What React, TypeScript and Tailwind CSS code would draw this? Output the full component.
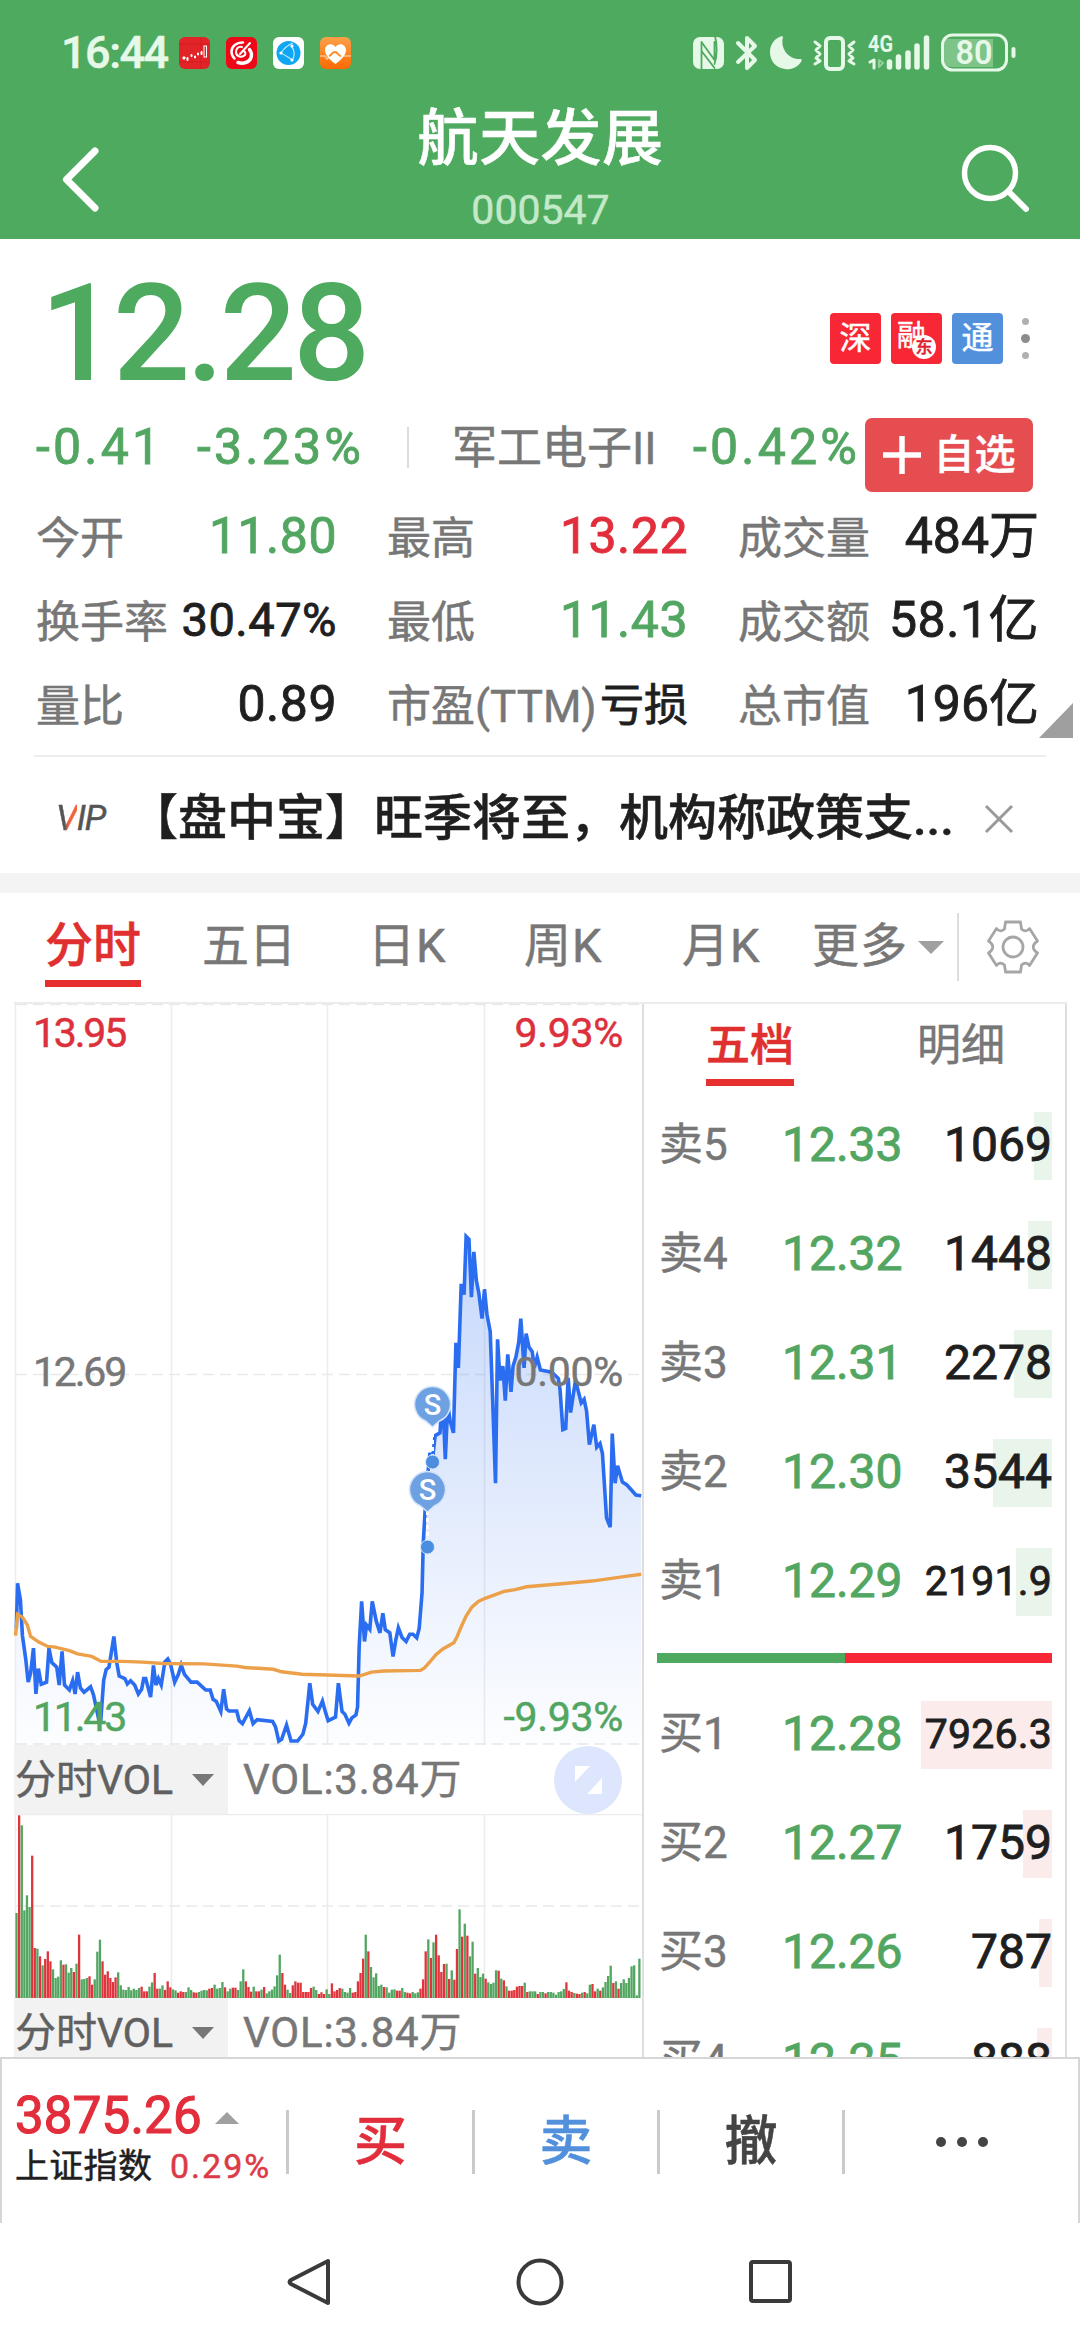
import type { ReactNode } from "react";
import clsx from "clsx";

const FONT = "font-['Roboto','Noto_Sans_CJK_SC',sans-serif]";

type Level = { label: string; price: string; volume: string; bar: number };

const asks: Level[] = [
  { label: "卖5", price: "12.33", volume: "1069", bar: 18 },
  { label: "卖4", price: "12.32", volume: "1448", bar: 24 },
  { label: "卖3", price: "12.31", volume: "2278", bar: 38 },
  { label: "卖2", price: "12.30", volume: "3544", bar: 59 },
  { label: "卖1", price: "12.29", volume: "2191.9", bar: 36 },
];

const bids: Level[] = [
  { label: "买1", price: "12.28", volume: "7926.3", bar: 131 },
  { label: "买2", price: "12.27", volume: "1759", bar: 29 },
  { label: "买3", price: "12.26", volume: "787", bar: 13 },
  { label: "买4", price: "12.25", volume: "888", bar: 15 },
];

// One entry per minute: g = falling, r = rising, followed by the bar height
const volumeBars = (
  "g255 r548 g518 g263 g308 g273 r427 r150 g148 r125 g98 r117 r140 r110 g86 g60 g64 g113 r100 g101 " +
  "g76 g90 r78 g103 r190 g56 g57 g60 r65 r40 g56 g139 g175 r110 r70 r80 r60 r48 r62 g77 " +
  "g38 g25 g24 g33 g23 g28 g24 g30 r34 r20 r20 g34 g47 r75 r28 g28 g38 r24 r50 r32 " +
  "g26 g23 r16 r20 r18 g18 g32 g24 r17 r16 g18 g22 g24 g23 r28 r30 g40 g28 g30 g48 " +
  "r32 g20 g28 r31 r31 g24 g50 g86 r50 r33 r19 g34 r20 r20 g25 r33 g14 g20 g25 g35 " +
  "g68 g130 r75 r40 g25 g15 r38 r50 r46 r46 r18 r18 r18 r30 g34 g24 r12 r17 r12 g26 " +
  "g12 r44 r20 r24 r30 g28 g18 g16 g30 r16 r18 r50 r75 r118 g190 r140 g93 g62 g74 g36 " +
  "g40 r33 g32 g16 g25 g26 r22 r22 g30 g18 r16 r14 g18 g14 g17 r28 r56 r140 g176 r120 " +
  "g167 r190 r128 r78 r102 g103 r57 g83 r55 r147 g266 r184 g223 r187 g125 g169 r73 g90 g63 g73 " +
  "r58 g47 g42 g46 g83 r82 g58 r53 g35 r22 r22 r24 r34 r36 r36 g46 r18 g20 g20 g20 " +
  "r12 g18 g18 r14 g18 g18 g16 g10 g18 g20 g27 r47 r22 r18 g15 r13 r12 g16 r18 g14 " +
  "g40 r42 r20 g28 r22 g32 g48 g66 g97 r45 g50 r28 g45 g56 g45 g60 g95 g98 g8 g118"
)
  .split(" ")
  .map((s) => ({ up: s[0] === "r", h: Number(s.slice(1)) / 3 }));

const priceLine =
  "40,1200 43,1073 50,1120 55,1220 63,1285 69,1350 75,1325 82,1255 88,1383 94,1312 101,1356 114,1350 120,1255 127,1295 139,1308 145,1358 152,1264 158,1358 170,1372 178,1346 184,1383 190,1322 197,1366 206,1378 222,1363 229,1385 242,1455 247,1455 254,1345 260,1315 267,1308 279,1222 286,1295 292,1333 306,1340 312,1355 320,1346 330,1358 339,1383 347,1370 352,1340 357,1340 369,1392 376,1303 382,1358 388,1340 395,1358 404,1293 411,1285 418,1300 428,1350 437,1328 444,1302 452,1328 468,1350 483,1350 504,1372 515,1372 522,1398 530,1404 541,1432 548,1370 555,1425 561,1431 580,1431 586,1458 594,1466 611,1430 620,1466 630,1455 668,1460 675,1475 683,1515 690,1510 702,1470 713,1515 729,1515 742,1496 749,1465 759,1353 766,1412 779,1432 790,1403 797,1432 804,1458 822,1448 829,1353 838,1432 845,1440 855,1465 862,1450 872,1442 876,1420 880,1250 886,1124 893,1236 898,1190 906,1202 912,1124 922,1180 931,1212 938,1157 944,1203 955,1212 963,1278 970,1230 976,1198 985,1225 995,1236 1004,1216 1012,1216 1021,1226 1027,1200 1034,1100 1037,960 1042,860 1046,790 1053,712 1061,712 1066,660 1078,652 1084,540 1091,726 1097,572 1103,620 1111,652 1117,400 1123,470 1130,235 1137,265 1142,102 1149,110 1155,272 1161,145 1167,225 1173,260 1181,332 1187,250 1193,320 1201,368 1207,560 1214,793 1219,390 1225,505 1232,465 1238,562 1244,432 1252,537 1257,465 1264,440 1271,398 1276,332 1284,470 1289,374 1296,412 1304,425 1309,470 1316,440 1324,476 1352,482 1368,500 1372,530 1379,643 1386,640 1392,498 1398,595 1410,505 1424,568 1431,558 1437,590 1444,685 1455,629 1462,692 1470,682 1476,710 1486,890 1495,916 1500,654 1507,793 1513,744 1525,790 1536,798 1558,826 1571,828";

const averageLine =
  "38,1220 43,1160 55,1168 67,1190 75,1222 95,1238 117,1250 135,1252 170,1262 190,1271 225,1278 248,1292 300,1292 350,1294 400,1298 500,1299 580,1305 600,1309 670,1314 690,1321 740,1328 880,1333 910,1322 940,1319 1030,1317 1040,1310 1052,1295 1068,1273 1085,1257 1112,1240 1120,1222 1130,1195 1142,1165 1156,1140 1172,1124 1187,1116 1235,1096 1262,1091 1290,1083 1390,1073 1450,1067 1520,1056 1571,1048";

function StatusBar() {
  return (
    <div className="flex h-[100px] items-start justify-between pl-[61px] pr-[64px] pt-[33px]">
      <div className="flex h-[40px] items-center">
        <span className="w-[118px] text-[45px] font-medium leading-[40px] tracking-[-1.5px] text-[#e6f8e8]">
          16:44
        </span>
        <div className="flex gap-4">
          <svg width="31" height="32" viewBox="0 0 31 32">
            <rect width="31" height="32" rx="6" fill="#e22428" />
            <path d="M0 7H31M22 0V32M0 25H31" stroke="#d01c22" />
            <path d="M4 20h2v2h-2zM8 20.500h1v3h-1zM12 17.500h1v2h-1zM15.500 19h1v2h-1zM18.500 16h1v2h-1zM22 14.500h1v3h-1z" fill="#fff" stroke="#fff" />
            <rect x="25" y="9" width="2.500" height="11" fill="none" stroke="#fff" />
          </svg>
          <svg width="31" height="32" viewBox="0 0 31 32" fill="none" strokeLinecap="round">
            <rect width="31" height="32" rx="6" fill="#ee0716" />
            <path d="M17 5.500C11 5 5.500 9 5.500 14.500c0 3 1 5 3 7" stroke="#fff" strokeWidth="2.500" />
            <path d="M12 25.500c7 2 13.500-1 13.500-8 0-2-1-3-2-5" stroke="#fff" strokeWidth="3.500" />
            <path d="M16 10c-4-1-6 2-6 5 0 5 6 6 9 3 1-2 0-4-2-4M24 6L14 17" stroke="#fff" strokeWidth="2" />
          </svg>
          <svg width="31" height="32" viewBox="0 0 31 32" fill="none">
            <rect width="31" height="32" rx="6" fill="#fff" />
            <circle cx="15.500" cy="16" r="12" fill="#0fa6f4" />
            <path d="M8 16C11 11 15 8 20 6M8 16c4 2 8 5 12 7M18 9c4 4 4 10 1 15" stroke="#bfeaff" strokeWidth="1.200" />
            <circle cx="8" cy="16" r="1.600" fill="#fff" />
            <circle cx="19" cy="9" r="1.600" fill="#fff" />
            <circle cx="19" cy="23" r="1.600" fill="#fff" />
          </svg>
          <svg width="31" height="32" viewBox="0 0 31 32" fill="none">
            <defs>
              <linearGradient id="health" x1="0" y1="0" x2="0" y2="1">
                <stop stopColor="#fda04a" />
                <stop offset="1" stopColor="#fb6a03" />
              </linearGradient>
            </defs>
            <rect width="31" height="32" rx="6" fill="url(#health)" />
            <path d="M0 19h5l2 3 3-3h21" stroke="#ffc187" strokeWidth="1.500" />
            <path d="M15.500 27C9 22 5 18 5 13c0-6 7-8 10.500-3C19 5 26 7 26 13c0 5-4 9-10.500 14z" fill="#fff" />
            <path d="M9 19c3-1 3-4 6-4s3 4 6 4" stroke="#fb8a2c" strokeWidth="2" />
          </svg>
        </div>
      </div>

      <svg width="324" height="40" viewBox="0 0 324 40" fill="none" stroke="#e6f8e8" strokeLinejoin="round" strokeLinecap="round">
        {/* nfc */}
        <rect x="1" y="4" width="31" height="32" rx="7" fill="#e6f8e8" stroke="none" />
        <path d="M9.500 37V9L22.500 27V9M9.500 18L22.500 35M23 3C25.500 12 25 24 22.500 31" stroke="#4eaa5e" strokeWidth="1.800" />
        {/* bluetooth */}
        <path d="M46 10L63 27L55 35V5L63 13L46 29" strokeWidth="4" />
        {/* do not disturb */}
        <path d="M91 4C88 15 96 27 109 26C110 26 110 27 109 29C105 35 98 37 93 36C83 35 78 27 78 19C78 11 83 5 90 3Z" fill="#e6f8e8" stroke="none" />
        {/* vibrate */}
        <rect x="134" y="5" width="17" height="31" rx="4" strokeWidth="4" />
        <path d="M123 9l5 4-4 4 4 4-4 4 4 3-5 3M162 9l-5 4 4 4-4 4 4 4-4 3 5 3" strokeWidth="3" />
        {/* data arrows and signal */}
        <path d="M178 29l4-2v8" strokeWidth="3" />
        <path d="M187 27v7l4-4z" stroke="#93cf9b" strokeWidth="2" />
        <path d="M197.500 29v5M206.500 24v10M216 20v14M225 13v21M234.500 5v29" strokeWidth="5.500" />
        <text x="176" y="19" fontSize="23" fontWeight="700" fill="#e6f8e8" stroke="none" textLength="25" lengthAdjust="spacingAndGlyphs">
          4G
        </text>
        {/* battery */}
        <path d="M252 6H301V34H260C253 34 252 30 252 26Z" fill="#7ec388" stroke="none" />
        <rect x="250.500" y="2" width="64" height="35" rx="10" strokeWidth="3" />
        <path d="M321.500 16v7" strokeWidth="4" />
        <text x="282" y="31" fontSize="33" fontWeight="600" fill="#e6f8e8" stroke="none" textAnchor="middle" textLength="37" lengthAdjust="spacingAndGlyphs">
          80
        </text>
      </svg>
    </div>
  );
}

function Header() {
  return (
    <header className="h-[239px] bg-[#4eaa5e] text-white">
      <StatusBar />
      <div className="flex h-[139px] items-start justify-between pl-[58px] pr-[50px]">
        <svg className="mt-[44px]" width="63" height="70" fill="none" stroke="#fff" strokeWidth="7" strokeLinecap="round" strokeLinejoin="round">
          <path d="M37 7L8.500 35.500L37 64" />
        </svg>
        <div className="flex flex-col items-center gap-[20px] pt-[8px]">
          <h1 className="text-[61px] font-medium leading-[62px] tracking-[0.500px]">航天发展</h1>
          <span className="text-[41px] leading-[40px] text-[#c4e9c9]">000547</span>
        </div>
        <svg className="mt-[40px]" width="70" height="74" fill="none" stroke="#fff" strokeWidth="5.500" strokeLinecap="round">
          <circle cx="30" cy="33" r="25.500" />
          <path d="M49 52L66 69" strokeWidth="6" />
        </svg>
      </div>
    </header>
  );
}

function Stat({ label, value, tone = "text-[#1f1f1f]" }: { label: string; value: string; tone?: string }) {
  return (
    <div className="flex h-[84px] items-center justify-between">
      <span className="whitespace-nowrap pt-[4px] text-[44px] text-[#777]">{label}</span>
      <span className={clsx("whitespace-nowrap pb-[2px] [-webkit-text-stroke:0.9px]", tone)}>{value}</span>
    </div>
  );
}

function Quote() {
  return (
    <section className="h-[634px] bg-white">
      <div className="flex h-[176px] items-center justify-between pl-[40px] pr-[50px] pt-[13px]">
        <span className="text-[136px] font-medium leading-[120px] tracking-[-4.200px] text-[#4eaa5e] [-webkit-text-stroke:0px]">
          12.28
        </span>
        <div className="flex items-center gap-[10px] pt-[9px] text-[32px] leading-[51px] text-white">
          <span className="size-[51px] rounded-[4px] bg-[#f72735] text-center">深</span>
          <span className="relative size-[51px] rounded-[4px] bg-[#f72735] pl-[6px] text-[29px] leading-[46px]">
            融
            <span className="absolute bottom-[5px] right-[6px] size-[24px] rounded-full bg-white text-center text-[17px] font-medium leading-[24px] text-[#e0222f]">
              东
            </span>
          </span>
          <span className="size-[51px] rounded-[4px] bg-[#5290dc] text-center">通</span>
          <div className="ml-[7px] flex w-[10px] flex-col items-center gap-[9px]">
            <i className="size-[7px] rounded-full bg-[#b0b0b0]" />
            <i className="size-[9px] rounded-full bg-[#8c8c8c]" />
            <i className="size-[7px] rounded-full bg-[#b0b0b0]" />
          </div>
        </div>
      </div>

      <div className="flex h-[80px] items-center whitespace-nowrap pb-[16px] pl-[36px] text-[50px] leading-[60px] tracking-[3.200px]">
        <span className="w-[161px] shrink-0 text-[#52a661] [-webkit-text-stroke:0.9px]">-0.41</span>
        <span className="w-[210px] shrink-0 text-[#52a661] [-webkit-text-stroke:0.9px]">-3.23%</span>
        <i className="h-[41px] w-[2px] shrink-0 bg-[#ddd]" />
        <span className="w-[284px] shrink-0 pl-[43px] pt-[4px] text-[45px] tracking-normal text-[#777]">军工电子II</span>
        <span className="w-[172px] shrink-0 text-[#52a661] [-webkit-text-stroke:0.9px]">-0.42%</span>
        <button className="mt-[16px] flex h-[74px] w-[168px] shrink-0 items-center justify-center gap-[13px] rounded-[7px] bg-[#e54d50] text-[41px] font-medium tracking-normal text-white">
          <svg width="38" height="38" stroke="#fff" strokeWidth="5.500">
            <path d="M0 19H38M19 0V38" />
          </svg>
          自选
        </button>
      </div>

      <div className="relative grid h-[252px] grid-cols-[301px_301px_301px] gap-x-[50px] pl-[36px] text-[50px]">
        <Stat label="今开" value="11.80" tone="text-[#52a661] tracking-[0.500px]" />
        <Stat label="最高" value="13.22" tone="text-[#e22e3c] tracking-[0.500px]" />
        <Stat label="成交量" value="484万" />
        <Stat label="换手率" value="30.47%" tone="text-[#1f1f1f] text-[47px] tracking-[0.500px]" />
        <Stat label="最低" value="11.43" tone="text-[#52a661] tracking-[0.500px]" />
        <Stat label="成交额" value="58.1亿" tone="text-[#1f1f1f] tracking-[0.500px]" />
        <Stat label="量比" value="0.89" tone="text-[#1f1f1f] tracking-[0.500px]" />
        <Stat label="市盈(TTM)" value="亏损" tone="text-[#1f1f1f] text-[44px] pt-[4px]" />
        <Stat label="总市值" value="196亿" />
        <i className="absolute bottom-[9px] right-[7px] border-b-[35px] border-l-[34px] border-b-[#9f9f9f] border-l-transparent" />
      </div>

      <div className="mx-[34px] mt-[8px] h-[2px] bg-[#ededed]" />

      <div className="flex h-[118px] items-center pl-[56px] pr-[66px] pt-[6px]">
        <span className="w-[73px] text-[35px] italic tracking-[-1px] text-[#555]">
          <span className="bg-gradient-to-r from-[#555] from-40% to-[#f0643c] to-60% bg-clip-text text-transparent">V</span>IP
        </span>
        <span className="flex-1 whitespace-nowrap text-[49px] font-medium leading-[60px] text-[#1f1f1f]">
          【盘中宝】旺季将至，机构称政策支...
        </span>
        <svg width="30" height="30" stroke="#999" strokeWidth="3">
          <path d="M2 2L28 28M28 2L2 28" />
        </svg>
      </div>
    </section>
  );
}

function PeriodTabs() {
  return (
    <nav className="flex h-[109px] bg-white pl-[45px] pt-[23px] text-[47px] leading-[60px] text-[#777]">
      <div className="w-[157px]">
        <span className="inline-block h-[71px] border-b-[7px] border-[#e63030] text-[48px] font-medium text-[#e02f2f]">分时</span>
      </div>
      <span className="w-[166px]">五日</span>
      <span className="w-[156px] tracking-[1px]">日K</span>
      <span className="w-[158px] tracking-[1px]">周K</span>
      <span className="w-[130px] tracking-[1px]">月K</span>
      <span className="w-[106px] tracking-[1px]">更多</span>
      <i className="mt-[25px] h-0 border-x-[13px] border-t-[13px] border-x-transparent border-t-[#a0a0a0]" />
      <i className="ml-[13px] mt-[-3px] h-[68px] w-[2px] bg-[#ddd]" />
      <svg className="ml-[27px] mt-[4px]" width="54" height="54" viewBox="-27 -27 54 54" fill="none" stroke="#a6a6a6" strokeWidth="2.800" strokeLinejoin="round">
        <path d="M-7.500 -25H7.500L8.500 -18Q13 -14 16.500 -18.500L24.500 -6Q16 0 24.500 6L16.500 18.500Q13 14 8.500 18L7.500 25H-7.500L-8.500 18Q-13 14 -16.500 18.500L-24.500 6Q-16 0 -24.500 -6L-16.500 -18.500Q-13 -14 -8.500 -18Z" />
        <circle r="10" />
      </svg>
    </nav>
  );
}

function ChartLabel({ children, tone, right }: { children: ReactNode; tone: string; right?: ReactNode }) {
  return (
    <div className={clsx("flex justify-between text-[41px] leading-[44px] tracking-[-2.200px]", tone)}>
      <span>{children}</span>
      <span className="tracking-[-0.300px]">{right}</span>
    </div>
  );
}

function SellPin({ x, y }: { x: number; y: number }) {
  return (
    <g transform={`translate(${x} ${y})`}>
      <path d="M0 22V58" stroke="#fff" strokeWidth="3" strokeDasharray="4 3" />
      <circle cy="58" r="7" fill="#4b8ee0" stroke="#d5e4fa" />
      <path d="M0 23L-7 17A18 18 0 1 1 7 17Z" fill="#6ea1e2" stroke="#d5e4fa" strokeWidth="1.500" />
      <text y="10.500" fontSize="29" fontWeight="500" fill="#fff" textAnchor="middle">
        S
      </text>
    </g>
  );
}

function PriceChart() {
  return (
    <div className="relative h-[741px]">
      <svg className="absolute inset-0" width="628" height="741" fill="none">
        <defs>
          <linearGradient id="area" x1="0" y1="0" x2="0" y2="1">
            <stop stopColor="#2a6df0" stopOpacity="0.27" />
            <stop offset="1" stopColor="#2a6df0" stopOpacity="0.01" />
          </linearGradient>
        </defs>
        <path d="M1.500 0V741M157.500 0V741M313.500 0V741M470.500 0V741" stroke="#ececec" strokeWidth="1.500" />
        <path d="M2 .5H628M2 370.500H628M2 740H628" stroke="#e9e9e9" strokeWidth="1.500" strokeDasharray="11 6" />
        <g transform="translate(-14 196) scale(.40816 .35714)">
          <polygon points={`40,1525 ${priceLine} 1571,1525`} fill="url(#area)" />
          <polyline points={priceLine} stroke="#2a6df0" strokeWidth="3.600" vectorEffect="non-scaling-stroke" />
          <polyline points={averageLine} stroke="#eca04a" strokeWidth="3.400" vectorEffect="non-scaling-stroke" />
        </g>
        <SellPin x={418.500} y={400} />
        <SellPin x={413.500} y={485} />
      </svg>
      <div className="relative flex h-full flex-col px-[19px] pt-[7px]">
        <ChartLabel tone="text-[#dc303c]" right="9.93%">13.95</ChartLabel>
        <div className="h-[295px]" />
        <ChartLabel tone="text-[#777]" right="0.00%">12.69</ChartLabel>
        <div className="h-[301px]" />
        <ChartLabel tone="text-[#52a661]" right="-9.93%">11.43</ChartLabel>
      </div>
    </div>
  );
}

function IndicatorBar({ children }: { children?: ReactNode }) {
  return (
    <div className="flex h-[69px] items-center text-[41px] leading-[60px]">
      <div className="flex h-full w-[214px] items-center justify-between bg-[#f2f2f2] pl-[1px] pr-[14px] text-[#606060]">
        分时VOL
        <i className="border-x-[11px] border-t-[12px] border-x-transparent border-t-[#777]" />
      </div>
      <span className="ml-[15px] flex-1 text-[42px] tracking-[0.800px] text-[#777]">VOL:3.84万</span>
      {children}
    </div>
  );
}

function VolumeChart() {
  return (
    <svg className="block" width="628" height="184" fill="none">
      <path d="M0 .5H628M1.500 0V184M157.500 0V184M313.500 0V184M470.500 0V184" stroke="#ececec" strokeWidth="1.500" />
      <path d="M2 92H628" stroke="#e9e9e9" strokeWidth="1.500" strokeDasharray="11 6" />
      {volumeBars.map((b, i) => (
        <rect key={i} x={1.400 + i * 2.606} y={184 - b.h} width="2.300" height={b.h} fill={b.up ? "#e0343c" : "#52a661"} />
      ))}
    </svg>
  );
}

function LevelRow({ level, side }: { level: Level; side: "ask" | "bid" }) {
  return (
    <div className="relative flex h-[109px] shrink-0 items-center pb-[3px] text-[48px] leading-[60px]">
      <i
        className={clsx("absolute right-0 top-[20px] h-[68px]", side === "ask" ? "bg-[#e9f4eb]" : "bg-[#fcebeb]")}
        style={{ width: level.bar }}
      />
      <span className="relative w-[125px] pl-[2px] text-[44px] text-[#777]">{level.label}</span>
      <span className="relative flex-1 text-[#52a661] [-webkit-text-stroke:0.9px]">{level.price}</span>
      <span
        className={clsx(
          "relative text-[#1f1f1f] [-webkit-text-stroke:0.9px]",
          level.volume.includes(".") && "text-[41px] tracking-[0.200px]",
        )}
      >
        {level.volume}
      </span>
    </div>
  );
}

function OrderBook() {
  return (
    <aside className="flex w-[425px] flex-col border-x-2 border-[#dedede] px-[13px]">
      <div className="flex h-[88px] shrink-0 pl-[49px] pt-[12px] text-[44px] leading-[60px] text-[#777]">
        <span className="mr-[123px] h-[70px] border-b-[7px] border-[#e63030] font-medium text-[#e02f2f]">五档</span>
        <span>明细</span>
      </div>
      {asks.map((l) => (
        <LevelRow key={l.label} level={l} side="ask" />
      ))}
      <div className="mb-[18px] mt-[16px] flex h-[10px] shrink-0">
        <i className="w-[188px] bg-[#4eaa5e]" />
        <i className="flex-1 bg-[#f72735]" />
      </div>
      {bids.map((l) => (
        <LevelRow key={l.label} level={l} side="bid" />
      ))}
    </aside>
  );
}

function BottomBar() {
  return (
    <footer className="flex h-[166px] items-start border-2 border-b-0 border-[#d6d6d6] bg-white">
      <div className="flex w-[284px] shrink-0 flex-col pl-[13px] pt-[32px]">
        <div className="flex h-[50px] items-center gap-[13px] whitespace-nowrap text-[51px] leading-[50px] tracking-[0.200px] text-[#e22e3c] [-webkit-text-stroke:1.2px]">
          3875.26
          <i className="mt-[4px] border-x-[12px] border-b-[12px] border-x-transparent border-b-[#a0a0a0]" />
        </div>
        <div className="flex h-[50px] items-center whitespace-nowrap text-[34px] leading-[50px] text-[#1f1f1f]">
          <span className="w-[155px] tracking-[0.300px]">上证指数</span>
          <span className="tracking-[2px] text-[#dc3a46]">0.29%</span>
        </div>
      </div>
      <div className="mt-[51px] grid h-[57px] flex-1 grid-cols-[186px_185px_185px_1fr] items-stretch text-[53px] font-medium leading-[64px]">
        <span className="border-l-[3px] border-[#cacaca] text-center text-[#e22e3c]">买</span>
        <span className="border-l-[3px] border-[#cacaca] text-center text-[#5290dc]">卖</span>
        <span className="border-l-[3px] border-[#cacaca] text-center text-[#444]">撤</span>
        <span className="flex items-center justify-center gap-[11px] border-l-[3px] border-[#cacaca] text-[#444]">
          <i className="size-[10px] rounded-full bg-[#444]" />
          <i className="size-[10px] rounded-full bg-[#444]" />
          <i className="size-[10px] rounded-full bg-[#444]" />
        </span>
      </div>
    </footer>
  );
}

function SystemNav() {
  return (
    <div className="flex h-[117px] items-center justify-center gap-[184px] bg-white">
      <svg width="46" height="50" fill="none" stroke="#3a3a3a" strokeWidth="4" strokeLinejoin="round">
        <path d="M42 4V46L5 27Q2 25 5 23Z" />
      </svg>
      <svg width="48" height="48" fill="none" stroke="#3a3a3a" strokeWidth="4">
        <circle cx="24" cy="24" r="21.500" />
      </svg>
      <svg width="46" height="46" fill="none" stroke="#3a3a3a" strokeWidth="4">
        <rect x="3" y="3" width="39" height="39" rx="2" />
      </svg>
    </div>
  );
}

export default function App() {
  return (
    <div
      className={clsx(
        "flex h-[2340px] w-[1080px] flex-col overflow-hidden bg-white [-webkit-text-stroke:0.5px]",
        FONT,
      )}
    >
      <Header />
      <Quote />
      <div className="h-[20px] bg-[#f4f4f4]" />
      <PeriodTabs />
      <main className="ml-[14px] mr-[13px] flex h-[1055px] overflow-hidden border-t-2 border-[#ececec]">
        <div className="w-[628px]">
          <PriceChart />
          <IndicatorBar>
            <svg className="mr-[20px]" width="68" height="68">
              <circle cx="34" cy="34" r="34" fill="#dde6fd" />
              <path d="M21 20H36L21 36ZM48 32V48H33Z" fill="#fff" />
            </svg>
          </IndicatorBar>
          <VolumeChart />
          <IndicatorBar />
        </div>
        <OrderBook />
      </main>
      <BottomBar />
      <SystemNav />
    </div>
  );
}
